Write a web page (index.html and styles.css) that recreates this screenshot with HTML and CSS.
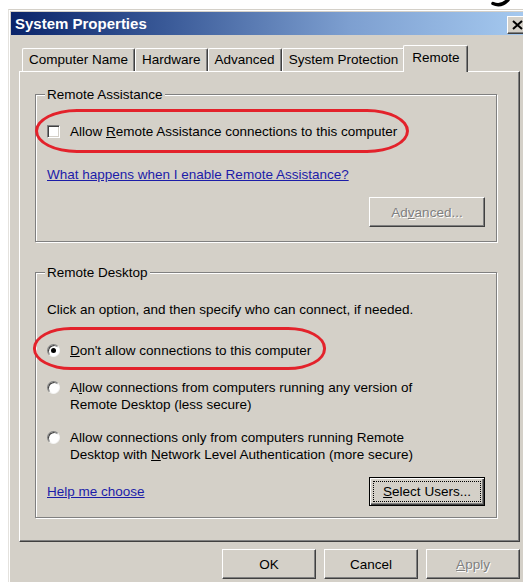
FILE: index.html
```html
<!DOCTYPE html>
<html lang="en">
<head>
<meta charset="utf-8">
<title>System Properties</title>
<link rel="stylesheet" href="styles.css">
</head>
<body>
<svg class="corner-mark" width="22" height="8" viewBox="0 0 22 8" aria-hidden="true">
  <path d="M2 3.5 Q10 7 17 0" fill="none" stroke="#000" stroke-width="3.5" stroke-linecap="round"/>
</svg>

<div class="window">
  <div class="titlebar">
    <span class="title">System Properties</span>
    <span class="close-btn" aria-label="Close">
      <svg width="11" height="10" viewBox="0 0 11 10" aria-hidden="true">
        <path d="M1 1 L10 9 M10 1 L1 9" stroke="#000" stroke-width="2" fill="none"/>
      </svg>
    </span>
  </div>

  <div class="dialog">
    <div class="tabs">
      <div class="tab">Computer Name</div>
      <div class="tab">Hardware</div>
      <div class="tab">Advanced</div>
      <div class="tab">System Protection</div>
      <div class="tab tab-active">Remote</div>
    </div>

    <div class="panel">
      <div class="group group-assist">
        <span class="group-title">Remote Assistance</span>
        <div class="option">
          <span class="checkbox"></span>
          <span class="option-text">Allow <u>R</u>emote Assistance connections to this computer</span>
        </div>
        <a class="link link-assist" href="#">What happens when I enable Remote Assistance?</a>
        <div class="group-actions">
          <span class="btn btn-disabled">Ad<u>v</u>anced...</span>
        </div>
        <span class="ring ring-assist"></span>
      </div>

      <div class="group group-desktop">
        <span class="group-title">Remote Desktop</span>
        <p class="desc">Click an option, and then specify who can connect, if needed.</p>
        <div class="option option-first">
          <span class="radio radio-on"></span>
          <span class="option-text"><u>D</u>on't allow connections to this computer</span>
        </div>
        <div class="option option-second">
          <span class="radio"></span>
          <span class="option-text">A<u>l</u>low connections from computers running any version of<br>Remote Desktop (less secure)</span>
        </div>
        <div class="option option-third">
          <span class="radio"></span>
          <span class="option-text">Allow connections only from computers running Remote<br>Desktop with <u>N</u>etwork Level Authentication (more secure)</span>
        </div>
        <div class="group-footer">
          <a class="link" href="#">Help me choose</a>
          <span class="btn btn-default"><u>S</u>elect Users...</span>
        </div>
        <span class="ring ring-desktop"></span>
      </div>
    </div>

    <div class="dialog-buttons">
      <span class="btn">OK</span>
      <span class="btn">Cancel</span>
      <span class="btn btn-disabled"><u>A</u>pply</span>
    </div>
  </div>
</div>
</body>
</html>
```

FILE: styles.css
```css
* {
  box-sizing: border-box;
}

html,
body {
  margin: 0;
  padding: 0;
}

body {
  position: relative;
  width: 523px;
  height: 582px;
  overflow: hidden;
  background: #fff;
  color: #000;
  font-family: "Liberation Sans", Arial, sans-serif;
  font-size: 13.5px;
  line-height: 17px;
}

/* stray stroke from the page behind the dialog */
.corner-mark {
  position: absolute;
  left: 491px;
  top: 0;
}

/* ---------- window frame ---------- */
.window {
  margin: 9px 0 0 8px;
  width: 524px;
  height: 600px;
  padding: 2px 2px 0 2px;
  background: #d4d0c8;
  border-top: 1px solid #d4d0c8;
  border-left: 1px solid #e4e2de;
  box-shadow: inset 1px 1px 0 #fff;
}

.titlebar {
  display: flex;
  justify-content: space-between;
  align-items: flex-start;
  height: 23px;
  padding: 0 2px 0 4px;
  background: linear-gradient(to right, #0a246a 0%, #3a5a98 30%, #7d9fd0 65%, #a6caf0 100%);
}

.title {
  color: #fff;
  font-weight: bold;
  font-size: 15px;
  line-height: 23px;
}

.close-btn {
  display: flex;
  align-items: center;
  justify-content: center;
  width: 21px;
  height: 18px;
  margin-top: 4px;
  background: #d4d0c8;
  border: 1px solid;
  border-color: #fff #404040 #404040 #fff;
  box-shadow: inset -1px -1px 0 #808080;
}

/* ---------- dialog body ---------- */
.dialog {
  width: 509px;
  padding-left: 8px;
}

.tabs {
  display: flex;
  align-items: flex-end;
  margin-top: 10px;
  padding-left: 3px;
}

.tab {
  height: 23px;
  padding: 0 6px;
  line-height: 21px;
  white-space: nowrap;
  border-top: 1px solid #fff;
  border-left: 1px solid #fff;
  border-right: 1px solid #404040;
  border-radius: 2px 2px 0 0;
  box-shadow: inset -1px 0 0 #808080;
}

.tab-active {
  position: relative;
  z-index: 1;
  height: 27px;
  margin: 0 -2px -1px -2px;
  padding: 0 8px;
  line-height: 23px;
  background: #d4d0c8;
}

.panel {
  width: 501px;
  padding: 22px 22px 23px 15px;
  border: 1px solid;
  border-color: #fff #404040 #404040 #fff;
  box-shadow: inset -1px -1px 0 #808080;
}

/* etched group box */
.group {
  position: relative;
  border: 1px solid #808080;
  box-shadow: inset 1px 1px 0 #fff, 1px 1px 0 #fff;
  padding: 28px 11px 14px 11px;
}

.group-desktop {
  margin-top: 30px;
  padding-bottom: 11px;
}

.group-title {
  position: absolute;
  top: -9px;
  left: 9px;
  padding: 0 2px;
  background: #d4d0c8;
}

.option {
  display: flex;
  align-items: flex-start;
  gap: 10px;
}

.option-first {
  margin-top: 24px;
}

.option-second {
  margin-top: 20px;
}

.option-third {
  margin-top: 16px;
}

.checkbox {
  flex: none;
  width: 13px;
  height: 13px;
  margin-top: 2px;
  background: #fff;
  border: 1px solid;
  border-color: #808080 #fff #fff #808080;
  box-shadow: inset 1px 1px 0 #404040, inset -1px -1px 0 #d4d0c8;
}

.radio {
  position: relative;
  flex: none;
  width: 13px;
  height: 13px;
  margin-top: 2px;
  border-radius: 50%;
  background: #fff;
  border: 1px solid;
  border-color: #808080 #f4f4f4 #f4f4f4 #808080;
  box-shadow: inset 1px 1px 0 #404040;
}

.radio-on::after {
  content: "";
  position: absolute;
  left: 3px;
  top: 3px;
  width: 5px;
  height: 5px;
  border-radius: 50%;
  background: #000;
}

.desc {
  margin: 0;
}

.link {
  display: block;
  color: #1c1ca8;
  text-decoration: underline;
}

.link-assist {
  margin-top: 26px;
}

.group-actions {
  display: flex;
  justify-content: flex-end;
  margin-top: 14px;
}

.group-footer {
  display: flex;
  justify-content: space-between;
  align-items: center;
  margin-top: 14px;
}

/* ---------- push buttons ---------- */
.btn {
  position: relative;
  display: flex;
  align-items: center;
  justify-content: center;
  width: 94px;
  height: 30px;
  background: #d4d0c8;
  border: 1px solid;
  border-color: #fff #404040 #404040 #fff;
  box-shadow: inset -1px -1px 0 #808080;
}

.group .btn {
  width: 116px;
}

.btn-disabled {
  color: #808080;
  text-shadow: 1px 1px 0 #fff;
}

.btn-default {
  height: 29px;
  border-color: #000;
  box-shadow: inset 1px 1px 0 #fff, inset -1px -1px 0 #404040, inset -2px -2px 0 #808080;
}

.btn-default::after {
  content: "";
  position: absolute;
  inset: 3px 3px 3px 3px;
  border: 1px dotted #000;
}

.dialog-buttons {
  display: flex;
  justify-content: flex-end;
  gap: 8px;
  width: 501px;
  margin-top: 7px;
}

/* red annotation rings */
.ring {
  position: absolute;
  border: 3px solid #e3222b;
  pointer-events: none;
}

.ring-assist {
  left: -1px;
  top: 14px;
  width: 374px;
  height: 44px;
  border-radius: 42px / 22px;
}

.ring-desktop {
  left: -3px;
  top: 54px;
  width: 293px;
  height: 43px;
  border-radius: 38px / 21px;
}
```
